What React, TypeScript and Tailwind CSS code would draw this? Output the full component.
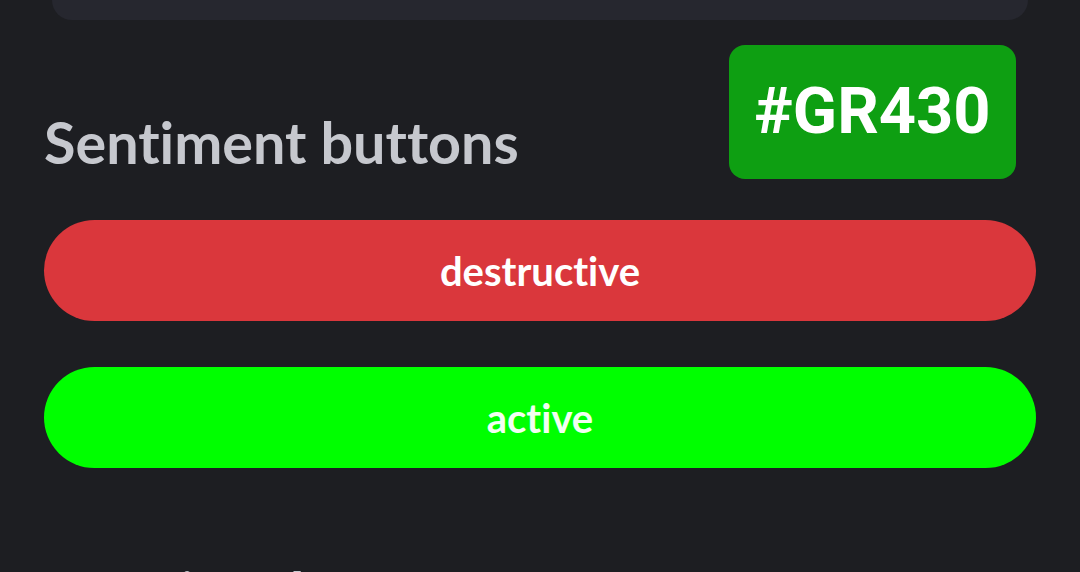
import React from "react";

export default function App() {
  return (
    <div className="w-[1080px] h-[572px] overflow-hidden bg-[#1d1e22] px-[44px] [font-variant-ligatures:none]" style={{ fontFamily: "Lato, 'Noto Sans', sans-serif" }}>
      <div className="mx-[8px] h-[20px] rounded-b-[30px] bg-[#26272f]" />
      <div className="mt-[25px] flex items-start justify-between">
        <h2 className="mt-[68px] text-[57.5px] font-bold leading-none text-[#c6c8ce]">Sentiment buttons</h2>
        <div
          className="mr-[20px] flex h-[134px] w-[287px] items-center justify-center rounded-[16px] bg-[#0e9f12] text-[65px] font-bold text-white"
          style={{ fontFamily: "Roboto, sans-serif" }}
        >
          #GR430
        </div>
      </div>
      <div className="mt-[41px] flex flex-col gap-[46px]">
        <button className="flex h-[101px] w-full items-center justify-center rounded-full bg-[#da373c] text-[40px] font-bold text-white">
          destructive
        </button>
        <button className="flex h-[101px] w-full items-center justify-center rounded-full bg-[#00ff00] text-[40px] font-bold text-[#f2fff2]">
          active
        </button>
      </div>
      <h2 className="mt-[95px] text-[58px] font-bold leading-none text-[#c6c8ce]">Premium buttons</h2>
    </div>
  );
}
